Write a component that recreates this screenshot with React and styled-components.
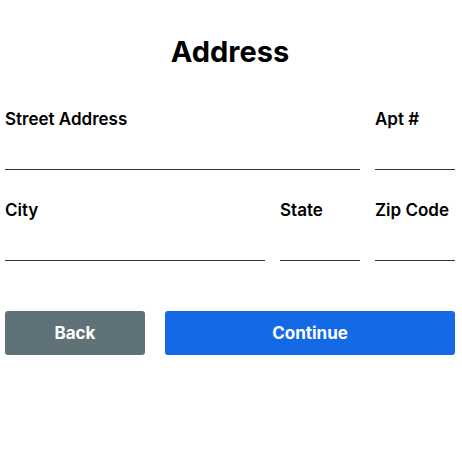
import React from "react";
import styled, { createGlobalStyle } from "styled-components";

const Global = createGlobalStyle`
  html, body { margin: 0; padding: 0; background: #fff; }
  body { font-family: Inter, "Noto Sans", sans-serif; color: #000; }
  * { box-sizing: border-box; }
`;

const Page = styled.div`
  width: 462px;
  padding: 32px 7px 0 5px;
  display: flex;
  flex-direction: column;
`;

const Title = styled.h1`
  margin: 0;
  height: 40px;
  line-height: 40px;
  font-size: 29px;
  font-weight: 700;
  text-align: center;
  font-family: Inter, sans-serif;
`;

const Form = styled.form`
  margin-top: 37px;
  display: flex;
  flex-direction: column;
  gap: 30px;
`;

const Row = styled.div`
  display: flex;
  gap: 15px;
`;

const Field = styled.label`
  display: flex;
  flex-direction: column;
  width: ${(p) => p.$w}px;
  flex: none;
`;

const Label = styled.span`
  height: 20px;
  line-height: 20px;
  font-size: 17px;
  font-weight: 600;
  white-space: nowrap;
`;

const Input = styled.input`
  height: 41px;
  border: none;
  border-bottom: 1px solid #333;
  outline: none;
  background: transparent;
  font: inherit;
  padding: 0;
`;

const Actions = styled.div`
  margin-top: 50px;
  display: flex;
  gap: 20px;
`;

const Button = styled.button`
  height: 44px;
  width: ${(p) => p.$w}px;
  border: none;
  border-radius: 3px;
  background: ${(p) => p.$bg};
  color: #fff;
  font-family: Inter, sans-serif;
  font-size: 17px;
  font-weight: 700;
  cursor: pointer;
`;

export default function App() {
  return (
    <>
      <Global />
      <Page>
        <Title>Address</Title>
        <Form onSubmit={(e) => e.preventDefault()}>
          <Row>
            <Field $w={355}>
              <Label>Street Address</Label>
              <Input type="text" />
            </Field>
            <Field $w={80}>
              <Label>Apt #</Label>
              <Input type="text" />
            </Field>
          </Row>
          <Row>
            <Field $w={260}>
              <Label>City</Label>
              <Input type="text" />
            </Field>
            <Field $w={80}>
              <Label>State</Label>
              <Input type="text" />
            </Field>
            <Field $w={80}>
              <Label>Zip Code</Label>
              <Input type="text" />
            </Field>
          </Row>
        </Form>
        <Actions>
          <Button type="button" $w={140} $bg="#5f7278">Back</Button>
          <Button type="button" $w={290} $bg="#1469e6">Continue</Button>
        </Actions>
      </Page>
    </>
  );
}
